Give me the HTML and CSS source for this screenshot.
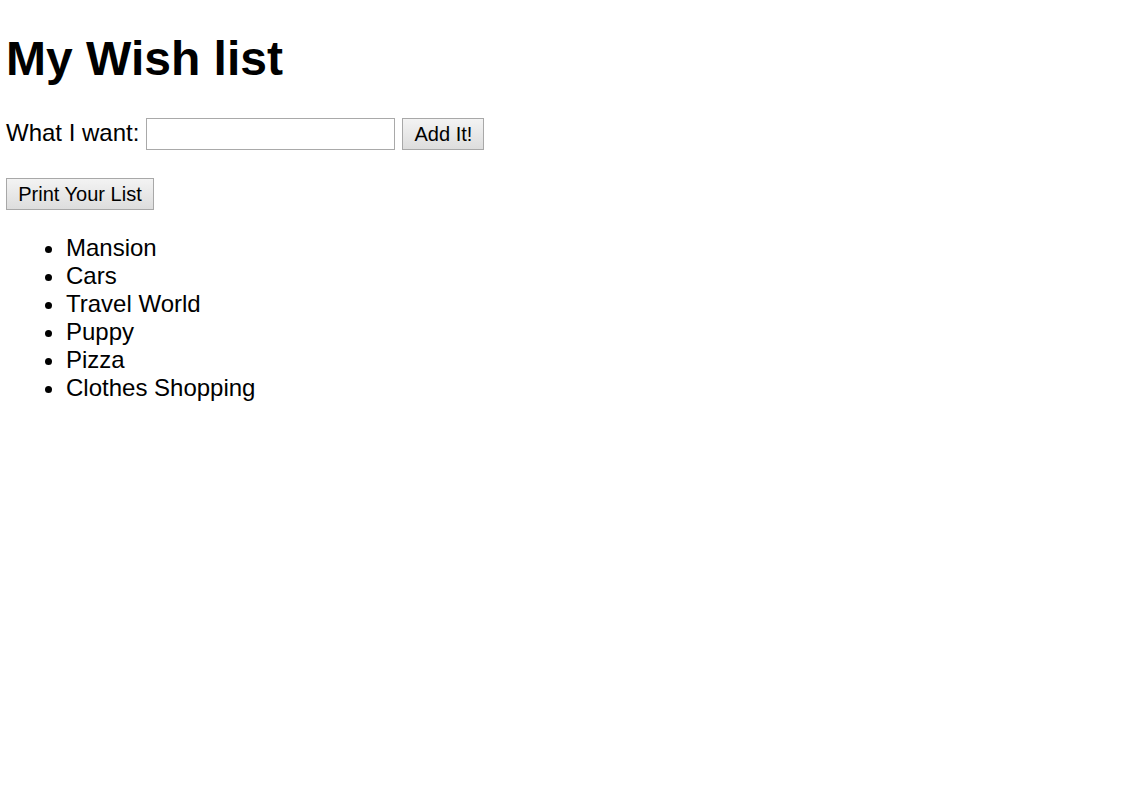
FILE: index.html
```html
<!DOCTYPE html>
<html>
<head>
<meta charset="utf-8">
<title>My Wish list</title>
<link rel="stylesheet" href="styles.css">
</head>
<body>
<main class="page">
  <h1 class="title">My Wish list</h1>
  <div class="add-row">
    <label class="label" for="wish">What I want:</label>
    <input class="wish-input" id="wish" type="text">
    <button class="btn" type="button">Add It!</button>
  </div>
  <div class="print-row">
    <button class="btn" type="button">Print Your List</button>
  </div>
  <ul class="wish-list">
    <li>Mansion</li>
    <li>Cars</li>
    <li>Travel World</li>
    <li>Puppy</li>
    <li>Pizza</li>
    <li>Clothes Shopping</li>
  </ul>
</main>
</body>
</html>
```
FILE: styles.css
```css
html, body {
  margin: 0;
  padding: 0;
  background: #ffffff;
}

body {
  font-family: "Liberation Sans", Arial, sans-serif;
  font-size: 24px;
  color: #000000;
}

.page {
  padding: 32px 6px;
}

.title {
  margin: 0 0 32px;
  font-size: 48px;
  font-weight: bold;
  line-height: 54px;
}

.add-row {
  display: flex;
  align-items: baseline;
  height: 32px;
  margin-bottom: 28px;
}

.label {
  line-height: 28px;
  margin-right: 7px;
}

.wish-input {
  box-sizing: border-box;
  width: 249px;
  height: 32px;
  margin: 0 7px 0 0;
  padding: 2px 4px;
  border: 1px solid #a9a9a9;
  font-family: "Liberation Sans", Arial, sans-serif;
  font-size: 20px;
  background: #ffffff;
}

.btn {
  box-sizing: border-box;
  height: 32px;
  margin: 0;
  padding: 0 11px;
  border: 1px solid #a8a8a8;
  border-radius: 0;
  background: linear-gradient(#f3f3f3, #dddddd);
  font-family: "Liberation Sans", Arial, sans-serif;
  font-size: 20px;
  line-height: 23px;
  color: #000000;
}

.print-row {
  display: flex;
  height: 32px;
  margin-bottom: 24px;
}

.print-row .btn {
  width: 148px;
}

.add-row .btn {
  width: 82px;
}

.wish-list {
  margin: 0;
  padding-left: 60px;
  line-height: 28px;
}
```
